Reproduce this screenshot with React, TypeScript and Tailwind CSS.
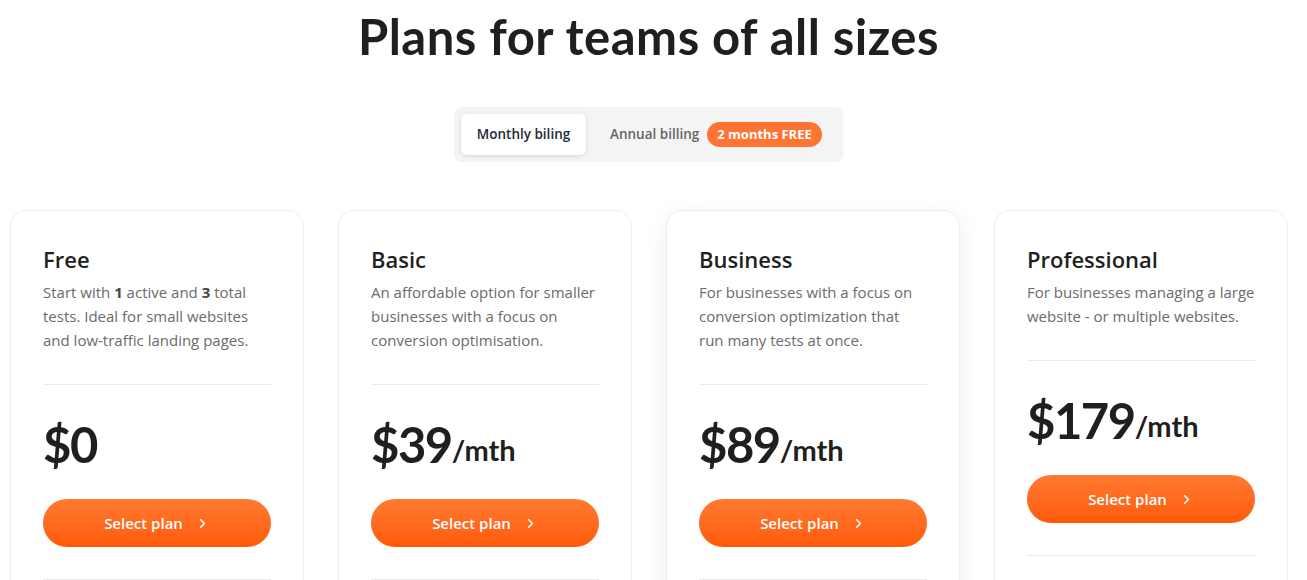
import { ChevronRight } from 'lucide-react';

type Plan = {
  name: string;
  desc: React.ReactNode;
  price: string;
  per?: boolean;
  featured?: boolean;
};

const plans: Plan[] = [
  {
    name: 'Free',
    desc: (
      <>
        Start with <b className="font-bold text-[#444]">1</b> active and <b className="font-bold text-[#444]">3</b> total tests. Ideal for small websites and low-traffic landing pages.
      </>
    ),
    price: '$0',
  },
  {
    name: 'Basic',
    desc: 'An affordable option for smaller businesses with a focus on conversion optimisation.',
    price: '$39',
    per: true,
  },
  {
    name: 'Business',
    desc: 'For businesses with a focus on conversion optimization that run many tests at once.',
    price: '$89',
    per: true,
    featured: true,
  },
  {
    name: 'Professional',
    desc: 'For businesses managing a large website - or multiple websites.',
    price: '$179',
    per: true,
  },
];

export default function App() {
  return (
    <div className="min-h-screen bg-white font-['Open_Sans',sans-serif] text-[#1f1f1f] overflow-hidden">
      <div className="w-[1297px]">
        <h1 className="text-center font-['Lato',sans-serif] font-bold text-[49px] leading-none pt-[12px] tracking-[0.5px] text-[#1f1f1f]">
          Plans for teams of all sizes
        </h1>

        {/* billing toggle */}
        <div className="flex justify-center mt-[46px]">
          <div className="flex items-center bg-[#f4f4f4] rounded-lg p-[7px] w-[389px]">
            <button className="h-[41px] w-[125px] bg-white rounded-md shadow-[0_1px_4px_rgba(0,0,0,0.12)] text-[13.5px] font-semibold text-[#1f2937]">
              Monthly biling
            </button>
            <span className="ml-[24px] text-[13.5px] font-semibold text-[#666]">Annual billing</span>
            <span className="ml-[8px] h-[25px] px-[10px] flex items-center rounded-full bg-[#ff7433] text-white text-[13px] font-bold">
              2 months FREE
            </span>
          </div>
        </div>

        <div className="flex gap-[34px] px-[10px] mt-[48px]">
          {plans.map(p => (
            <div
              key={p.name}
              className={`w-[294px] shrink-0 h-[400px] rounded-2xl border border-[#ececec] bg-white px-[32px] pt-[34px] ${
                p.featured ? 'shadow-[0_6px_24px_rgba(0,0,0,0.07)]' : ''
              }`}
            >
              <h2 className="text-[22px] font-semibold leading-[28px] text-[#1f1f1f]">{p.name}</h2>
              <p className="mt-[7px] text-[15px] leading-[24px] text-[#6b6b6b]">{p.desc}</p>
              <div className="h-px bg-[#ebebeb] mt-[32px]" />
              <div className="mt-[24px] h-[60px] flex items-end font-['Lato',sans-serif] text-[#1f1f1f]">
                <span className="text-[49px] font-bold leading-none tracking-[-1.5px]">{p.price}</span>
                {p.per && <span className="text-[29px] font-bold leading-none mb-[5px]">/mth</span>}
              </div>
              <button className="mt-[30px] w-full h-[48px] rounded-full bg-gradient-to-b from-[#ff7a30] to-[#ff5a05] text-white text-[15px] font-semibold flex items-center justify-center gap-[12px]">
                Select plan
                <ChevronRight size={15} strokeWidth={2.5} />
              </button>
              <div className="h-px bg-[#ebebeb] mt-[32px]" />
            </div>
          ))}
        </div>
      </div>
    </div>
  );
}
